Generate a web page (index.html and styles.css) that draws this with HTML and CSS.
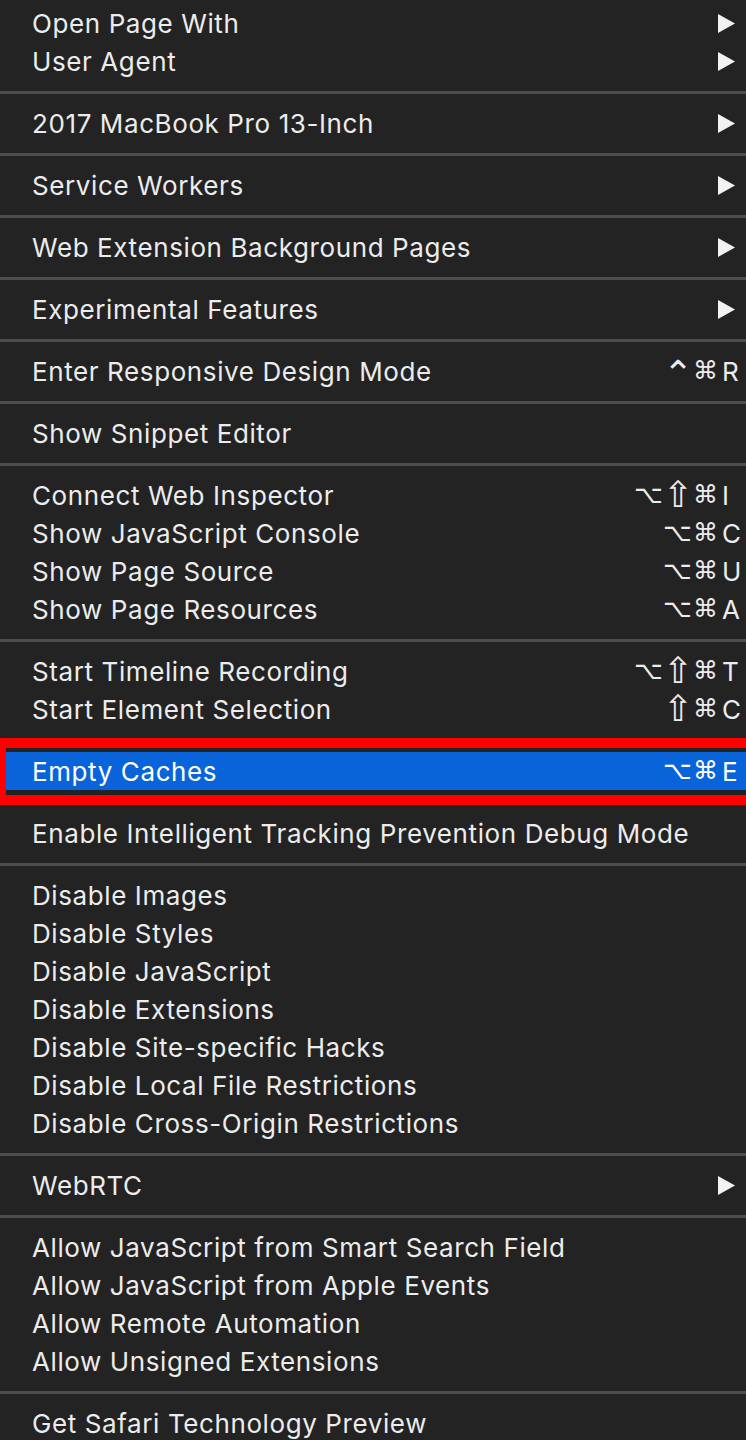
FILE: index.html
```html
<!DOCTYPE html>
<html>
<head>
<meta charset="utf-8">
<link rel="stylesheet" href="styles.css">
</head>
<body>
<div class="menu">
  <div class="group">
    <div class="item"><span class="label">Open Page With</span><svg class="arrow" viewBox="0 0 18 19"><polygon points="0,0 17,9.5 0,19"/></svg></div>
    <div class="item"><span class="label">User Agent</span><svg class="arrow" viewBox="0 0 18 19"><polygon points="0,0 17,9.5 0,19"/></svg></div>
  </div>
  <div class="sep"></div>
  <div class="group">
    <div class="item"><span class="label">2017 MacBook Pro 13-Inch</span><svg class="arrow" viewBox="0 0 18 19"><polygon points="0,0 17,9.5 0,19"/></svg></div>
  </div>
  <div class="sep"></div>
  <div class="group">
    <div class="item"><span class="label">Service Workers</span><svg class="arrow" viewBox="0 0 18 19"><polygon points="0,0 17,9.5 0,19"/></svg></div>
  </div>
  <div class="sep"></div>
  <div class="group">
    <div class="item"><span class="label">Web Extension Background Pages</span><svg class="arrow" viewBox="0 0 18 19"><polygon points="0,0 17,9.5 0,19"/></svg></div>
  </div>
  <div class="sep"></div>
  <div class="group">
    <div class="item"><span class="label">Experimental Features</span><svg class="arrow" viewBox="0 0 18 19"><polygon points="0,0 17,9.5 0,19"/></svg></div>
  </div>
  <div class="sep"></div>
  <div class="group">
    <div class="item"><span class="label">Enter Responsive Design Mode</span><span class="keys"><span class="mods"><span class="mod ctrl">⌃</span><span class="mod cmd">⌘</span></span><span class="key">R</span></span></div>
  </div>
  <div class="sep"></div>
  <div class="group">
    <div class="item"><span class="label">Show Snippet Editor</span></div>
  </div>
  <div class="sep"></div>
  <div class="group">
    <div class="item"><span class="label">Connect Web Inspector</span><span class="keys"><span class="mods"><span class="mod opt">⌥</span><span class="mod shift">⇧</span><span class="mod cmd">⌘</span></span><span class="key">I</span></span></div>
    <div class="item"><span class="label">Show JavaScript Console</span><span class="keys"><span class="mods"><span class="mod opt">⌥</span><span class="mod cmd">⌘</span></span><span class="key">C</span></span></div>
    <div class="item"><span class="label">Show Page Source</span><span class="keys"><span class="mods"><span class="mod opt">⌥</span><span class="mod cmd">⌘</span></span><span class="key">U</span></span></div>
    <div class="item"><span class="label">Show Page Resources</span><span class="keys"><span class="mods"><span class="mod opt">⌥</span><span class="mod cmd">⌘</span></span><span class="key">A</span></span></div>
  </div>
  <div class="sep"></div>
  <div class="group">
    <div class="item"><span class="label">Start Timeline Recording</span><span class="keys"><span class="mods"><span class="mod opt">⌥</span><span class="mod shift">⇧</span><span class="mod cmd">⌘</span></span><span class="key">T</span></span></div>
    <div class="item"><span class="label">Start Element Selection</span><span class="keys"><span class="mods"><span class="mod shift">⇧</span><span class="mod cmd">⌘</span></span><span class="key">C</span></span></div>
  </div>
  <div class="sep"></div>
  <div class="group">
    <div class="item selected"><span class="label">Empty Caches</span><span class="keys"><span class="mods"><span class="mod opt">⌥</span><span class="mod cmd">⌘</span></span><span class="key">E</span></span><span class="callout"></span></div>
  </div>
  <div class="sep"></div>
  <div class="group">
    <div class="item"><span class="label">Enable Intelligent Tracking Prevention Debug Mode</span></div>
  </div>
  <div class="sep"></div>
  <div class="group">
    <div class="item"><span class="label">Disable Images</span></div>
    <div class="item"><span class="label">Disable Styles</span></div>
    <div class="item"><span class="label">Disable JavaScript</span></div>
    <div class="item"><span class="label">Disable Extensions</span></div>
    <div class="item"><span class="label">Disable Site-specific Hacks</span></div>
    <div class="item"><span class="label">Disable Local File Restrictions</span></div>
    <div class="item"><span class="label">Disable Cross-Origin Restrictions</span></div>
  </div>
  <div class="sep"></div>
  <div class="group">
    <div class="item"><span class="label">WebRTC</span><svg class="arrow" viewBox="0 0 18 19"><polygon points="0,0 17,9.5 0,19"/></svg></div>
  </div>
  <div class="sep"></div>
  <div class="group">
    <div class="item"><span class="label">Allow JavaScript from Smart Search Field</span></div>
    <div class="item"><span class="label">Allow JavaScript from Apple Events</span></div>
    <div class="item"><span class="label">Allow Remote Automation</span></div>
    <div class="item"><span class="label">Allow Unsigned Extensions</span></div>
  </div>
  <div class="sep"></div>
  <div class="group">
    <div class="item"><span class="label">Get Safari Technology Preview</span></div>
  </div>
</div>
</body>
</html>
```

FILE: styles.css
```css
html, body {
  margin: 0;
  padding: 0;
  background: #232323;
  overflow: hidden;
}

.menu {
  width: 746px;
  padding-top: 4px;
  font-family: Inter, "Noto Sans", "Liberation Sans", sans-serif;
  font-size: 26px;
  letter-spacing: 0.6px;
  color: #ececec;
  display: flex;
  flex-direction: column;
}

.group {
  display: flex;
  flex-direction: column;
}

.sep {
  height: 3px;
  margin: 11px 0 10px;
  background: #4c4c4c;
}

.item {
  position: relative;
  height: 38px;
  display: flex;
  align-items: center;
  justify-content: space-between;
  padding-left: 32px;
  box-sizing: border-box;
  white-space: nowrap;
}

.item.selected {
  background: #0a64d9;
  color: #ffffff;
}

.arrow {
  width: 18px;
  height: 19px;
  margin-right: 10px;
  fill: #f2f2f2;
}

.keys {
  display: flex;
  align-items: center;
  letter-spacing: 0;
}

.mods {
  display: flex;
  align-items: center;
}

.mod {
  width: 29px;
  height: 38px;
  text-align: center;
  font-family: "DejaVu Sans", sans-serif;
  font-size: 27px;
  line-height: 38px;
}

.mod.opt {
  font-size: 25px;
}

.mod.cmd {
  width: 27px;
  font-size: 25px;
}

.mod.shift {
  font-size: 36px;
}

.mod.ctrl {
  font-size: 36px;
  line-height: 44px;
}

.key {
  width: 27px;
  padding-left: 3px;
  box-sizing: border-box;
}

.callout {
  position: absolute;
  left: 0;
  right: -20px;
  top: -14px;
  bottom: -15px;
  border: solid #ff0000;
  border-width: 10px 10px 10px 6px;
}
```
